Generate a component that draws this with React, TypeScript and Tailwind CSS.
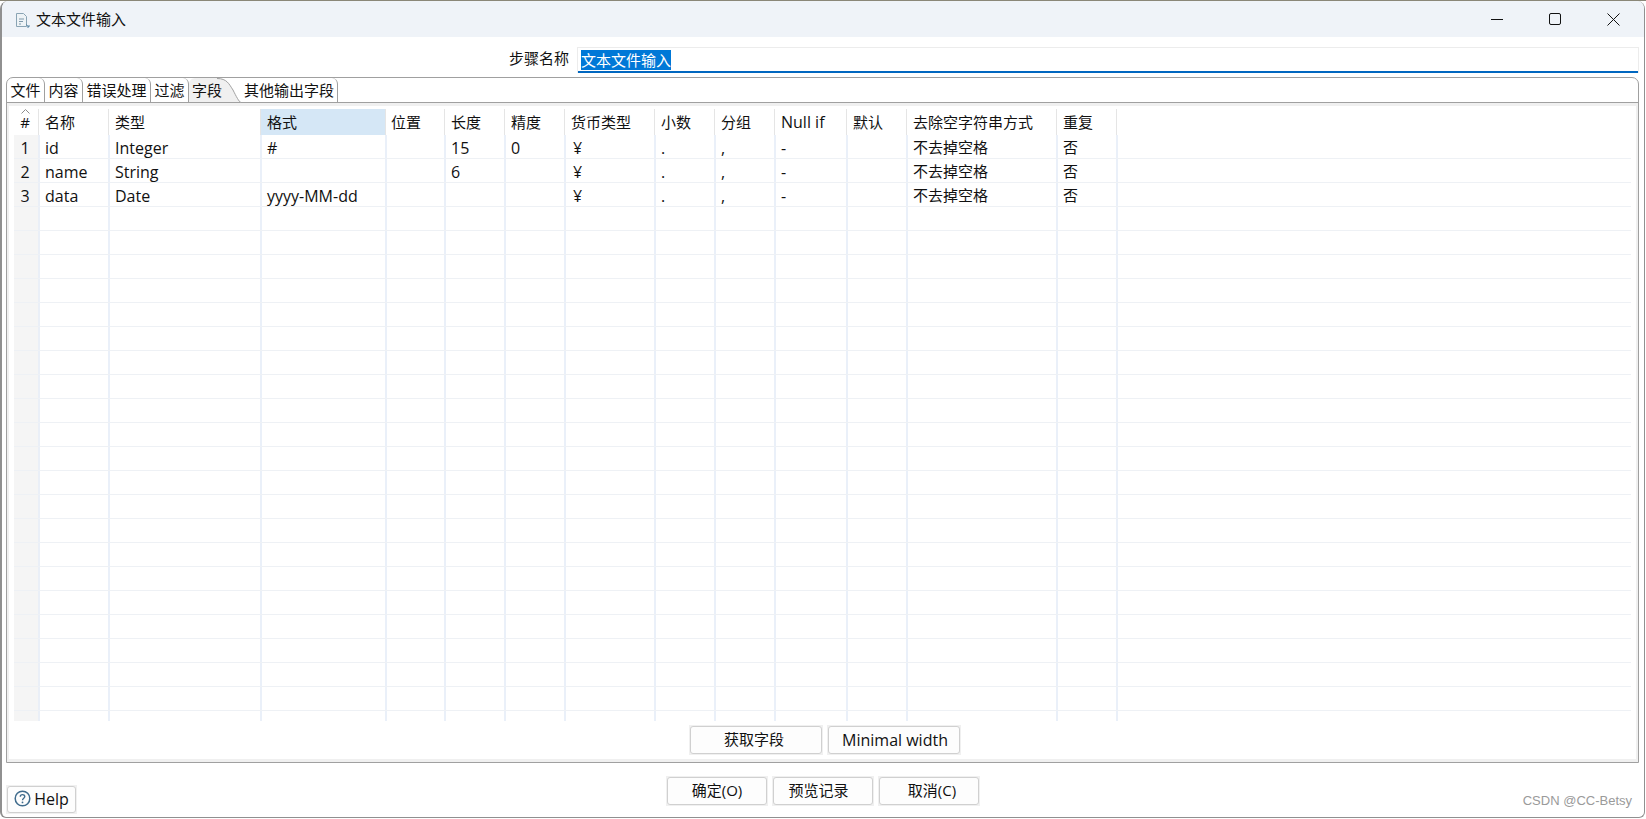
const font = "font-['Open_Sans','Noto_Sans_CJK_SC',sans-serif]";

const columns = [
  { title: "#", head: "w-[25px] justify-center pr-[2px]", body: "w-[26px] justify-center pr-[2px] bg-[#f5f5f5] border-r-[#eaeff7]" },
  { title: "名称", head: "w-[70px] pl-[6px]", body: "w-[70px] pl-[5px]" },
  { title: "类型", head: "w-[152px] pl-[6px]", body: "w-[152px] pl-[5px]" },
  { title: "格式", head: "w-[125px] pl-[6px] bg-[#d5e7f6]", body: "w-[125px] pl-[5px]" },
  { title: "位置", head: "w-[59px] pl-[5px]", body: "w-[59px] pl-[4px]" },
  { title: "长度", head: "w-[60px] pl-[6px]", body: "w-[60px] pl-[5px]" },
  { title: "精度", head: "w-[60px] pl-[6px]", body: "w-[60px] pl-[5px]" },
  { title: "货币类型", head: "w-[90px] pl-[6px]", body: "w-[90px] pl-[7px]" },
  { title: "小数", head: "w-[60px] pl-[6px]", body: "w-[60px] pl-[5px]" },
  { title: "分组", head: "w-[60px] pl-[6px]", body: "w-[60px] pl-[5px]" },
  { title: "Null if", head: "w-[72px] pl-[6px] text-[16px]", body: "w-[72px] pl-[5px]" },
  { title: "默认", head: "w-[60px] pl-[6px]", body: "w-[60px] pl-[5px]" },
  { title: "去除空字符串方式", head: "w-[150px] pl-[6px]", body: "w-[150px] pl-[5px]" },
  { title: "重复", head: "w-[60px] pl-[6px]", body: "w-[60px] pl-[5px]" },
];

const rows = [
  ["1", "id", "Integer", "#", "", "15", "0", "¥", ".", ",", "-", "", "不去掉空格", "否"],
  ["2", "name", "String", "", "", "6", "", "¥", ".", ",", "-", "", "不去掉空格", "否"],
  ["3", "data", "Date", "yyyy-MM-dd", "", "", "", "¥", ".", ",", "-", "", "不去掉空格", "否"],
];

const blankRows: string[][] = Array.from({ length: 22 }, () => Array(14).fill(""));

const isCjk = (value: string) => /[\u4e00-\u9fff]/.test(value);

const Tab = ({ label, className }: { label: string; className: string }) => (
  <div className={`h-[24px] border-r border-[#a0a0a0] rounded-tr-[6px] flex items-center justify-center ${className}`}>
    {label}
  </div>
);

const Btn = ({ label, className, inner = "" }: { label: string; className: string; inner?: string }) => (
  <div className={`h-[30px] p-px bg-[#f0f0f0] ${className}`}>
    <div className={`h-full rounded-[3px] border border-[#d0d0d0] bg-[#fdfdfd] flex items-center justify-center pb-px text-[#111] ${isCjk(label) ? "text-[15px]" : "text-[16px]"} ${inner}`}>
      {label}
    </div>
  </div>
);

const App = () => {
  return (
    <div className={`h-[819px] w-full bg-white border-t border-[#8a8778] pr-px pb-px text-[15px] text-[#111] ${font}`}>
      <div className="relative h-full rounded-t-[8px] rounded-b-[6px] bg-white border-r border-b border-l-2 border-[#909090] flex flex-col overflow-hidden">
        {/* title bar */}
        <div className="h-[36px] shrink-0 bg-[#eff3f8] flex items-center pl-[13px] pr-[2px]">
          <svg width="16" height="17" viewBox="0 0 16 17" fill="none" className="mr-[5px] mt-[2px]">
            <path d="M1.500 1.500h7l3 3v10h-10z" fill="#eef3f6" stroke="#8aa4b4" />
            <path d="M4 7h5M4 9.500h4M4 12h2" stroke="#7e98aa" />
            <path d="M11 12.500l3 2.500M14 13v2h-2" stroke="#5d88a4" />
          </svg>
          <span className="text-[15px]">文本文件输入</span>
          <div className="ml-auto flex items-center">
            <div className="w-[58px] h-[36px] flex items-center justify-center">
              <svg width="12" height="12" viewBox="0 0 12 12" fill="none">
                <path d="M0 6.500H12" stroke="#111" />
              </svg>
            </div>
            <div className="w-[58px] h-[36px] flex items-center justify-center">
              <svg width="12" height="12" viewBox="0 0 12 12" fill="none">
                <rect x="0.500" y="0.500" width="11" height="11" rx="1.500" stroke="#111" />
              </svg>
            </div>
            <div className="w-[58px] h-[36px] flex items-center justify-center">
              <svg width="13" height="13" viewBox="0 0 13 13" fill="none">
                <path d="M0.500 0.500L12.500 12.500M12.500 0.500L0.500 12.500" stroke="#111" />
              </svg>
            </div>
          </div>
        </div>

        {/* step name */}
        <div className="h-[40px] shrink-0 flex items-start pt-[10px] pr-[5px]">
          <span className="ml-[507px] mt-[-1px] w-[68px] leading-[24px]">步骤名称</span>
          <div className="flex-1 h-[26px] border border-b-0 border-[#ececec] border-b-transparent relative flex pl-[3px] pt-[2px]">
            <span className="h-[20px] bg-[#0078d7] text-white leading-[20px]">文本文件输入</span>
            <div className="absolute left-0 right-0 bottom-0 h-[2px] bg-[#0067c0]" />
          </div>
        </div>

        {/* tab folder */}
        <div className="flex-1 flex flex-col ml-[4px] mr-[5px] border border-[#a0a0a0] rounded-t-[7px] h-0">
          <div className="h-[24px] shrink-0 flex border-b border-[#a0a0a0] text-[15px] box-content">
            <Tab label="文件" className="w-[38px]" />
            <Tab label="内容" className="w-[38px]" />
            <Tab label="错误处理" className="w-[68px]" />
            <Tab label="过滤" className="w-[38px]" />
            <div className="relative w-[52px] h-[24px] flex items-center pl-[3px] bg-[#f0f0f0] rounded-tl-[6px]">
              字段
              <svg width="24" height="25" viewBox="0 0 24 25" className="absolute right-0 top-0" fill="none">
                <path d="M0 0.500C10 0.500 12 6 16 12C19 18 22 24 24 24.500V0H0Z" fill="#ffffff" />
                <path d="M0 0.500C10 0.500 12 6 16 12C19 18 22 24 24 24.500" stroke="#a0a0a0" />
              </svg>
            </div>
            <Tab label="其他输出字段" className="w-[97px]" />
          </div>

          {/* fields grid */}
          <div className="flex-1 flex flex-col border-2 border-t-[3px] border-[#f0f0f0] pl-[5px] pr-[5px] pt-[3px] border-b-[3px]">
            <div className="flex h-[26px] shrink-0 relative">
              {columns.map(col => (
                <div key={col.title} className={`flex items-center border-r border-[#e5e5e5] h-full ${col.head}`}>
                  {col.title}
                </div>
              ))}
              <svg width="9" height="5" viewBox="0 0 9 5" fill="none" className="absolute left-[7px] top-0">
                <path d="M0.500 4.500L4.500 0.500L8.500 4.500" stroke="#8c8c8c" />
              </svg>
            </div>
            <div className="h-[586px] shrink-0 overflow-hidden">
              {[...rows, ...blankRows].map((row, i) => (
                <div key={i} className="flex h-[24px] border-b border-[#eef1f5]">
                  {row.map((value, j) => (
                    <div
                      key={j}
                      className={`flex items-center pt-[2px] border-r-2 border-[#eaf0f9] ${columns[j].body} ${isCjk(value) ? "" : "text-[16px]"}`}
                    >
                      {value}
                    </div>
                  ))}
                </div>
              ))}
            </div>
            <div className="flex justify-center gap-[4px] pt-[4px] pl-[4px]">
              <Btn label="获取字段" className="w-[134px]" inner="pr-[3px]" />
              <Btn label="Minimal width" className="w-[134px]" inner="pl-[3px]" />
            </div>
          </div>
        </div>

        {/* dialog buttons */}
        <div className="h-[54px] shrink-0 flex items-start pl-[4px] relative">
          <div className="mt-[22px] w-[71px] h-[29px] p-px bg-[#f0f0f0]">
            <div className="h-full rounded-[3px] border border-[#d0d0d0] bg-[#fdfdfd] flex items-center justify-center gap-[3px] text-[16px] pb-[2px]">
              <svg width="17" height="17" viewBox="0 0 17 17" fill="none">
                <circle cx="8.500" cy="8.500" r="7.300" stroke="#3f6b8c" strokeWidth="1.500" />
                <path d="M6.300 6.800C6.300 4 10.800 4 10.800 6.600C10.800 8.300 8.500 8.200 8.500 10.300" stroke="#3f6b8c" strokeWidth="1.400" />
                <circle cx="8.500" cy="12.400" r="0.900" fill="#3f6b8c" />
              </svg>
              Help
            </div>
          </div>
          <div className="ml-[589px] mt-[13px] flex gap-[4px]">
            <Btn label="确定(O)" className="w-[102px]" />
            <Btn label="预览记录" className="w-[102px]" inner="pr-[9px]" />
            <Btn label="取消(C)" className="w-[102px]" inner="pl-[6px]" />
          </div>
          <span className="absolute right-[12px] bottom-[7px] text-[13px] leading-[18px] text-[#9a9a9a] font-['Liberation_Sans',sans-serif]">
            CSDN @CC-Betsy
          </span>
        </div>
      </div>
    </div>
  );
};

export default App;
